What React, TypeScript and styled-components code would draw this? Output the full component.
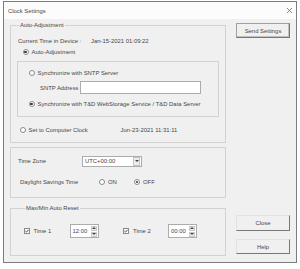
import React from "react";
import styled, { createGlobalStyle } from "styled-components";

const GlobalStyle = createGlobalStyle`
  html, body {
    margin: 0;
    padding: 0;
    background: #ffffff;
  }
  body {
    font-family: "Liberation Sans", Arial, sans-serif;
  }
`;

const Window = styled.div`
  box-sizing: border-box;
  width: 294px;
  height: 262px;
  margin: 1px 0 0 3px;
  border: 1px solid #7c7c7c;
  display: flex;
  flex-direction: column;
  font-size: 5.9px;
  color: #474747;
`;

const TitleBar = styled.div`
  flex: none;
  height: 17px;
  background: #fcfcfc;
  display: flex;
  align-items: center;
  justify-content: space-between;
  padding: 0 4px;
`;

const Body = styled.div`
  flex: 1;
  display: flex;
  background: #f0f0f0;
  padding: 2px 6px 0 6px;
`;

const LeftColumn = styled.div`
  width: 216px;
  display: flex;
  flex-direction: column;
`;

const RightColumn = styled.div`
  width: 54px;
  margin-left: 10px;
  padding: 2px 0 8px;
  display: flex;
  flex-direction: column;
  gap: 8px;
`;

const Spacer = styled.div`
  flex: 1;
`;

const Group = styled.fieldset<{ $pad: string; $top?: number }>`
  margin: ${(p) => p.$top ?? 0}px 0 0 0;
  padding: ${(p) => p.$pad};
  border: 1px solid #d2d2d2;
  min-width: 0;
  display: flex;
  flex-direction: column;
`;

const Caption = styled.legend`
  padding: 0 1px;
  margin-left: 2px;
  line-height: 8px;
  font-size: 5.9px;
`;

const Panel = styled.div<{ $pad: string; $top?: number; $w?: number; $h?: number }>`
  box-sizing: border-box;
  margin-top: ${(p) => p.$top ?? 0}px;
  width: ${(p) => (p.$w ? `${p.$w}px` : "auto")};
  height: ${(p) => (p.$h ? `${p.$h}px` : "auto")};
  padding: ${(p) => p.$pad};
  border: 1px solid #d2d2d2;
  display: flex;
  flex-direction: column;
`;

const Row = styled.div<{ $h?: number; $top?: number; $indent?: number }>`
  display: flex;
  align-items: center;
  height: ${(p) => p.$h ?? 10}px;
  margin-top: ${(p) => p.$top ?? 0}px;
  padding-left: ${(p) => p.$indent ?? 0}px;
  white-space: nowrap;
`;

const Label = styled.span<{ $w?: number }>`
  flex: none;
  width: ${(p) => (p.$w ? `${p.$w}px` : "auto")};
`;

const Radio = styled.span<{ $checked?: boolean }>`
  flex: none;
  box-sizing: border-box;
  width: 6px;
  height: 6px;
  margin: 0 3px 0 0.5px;
  border-radius: 50%;
  border: 1px solid #8a8a8a;
  background: #ffffff;
  display: flex;
  align-items: center;
  justify-content: center;

  &::after {
    content: "";
    width: 2.4px;
    height: 2.4px;
    border-radius: 50%;
    background: ${(p) => (p.$checked ? "#333333" : "transparent")};
  }
`;

const Option = styled.span<{ $w?: number }>`
  display: flex;
  align-items: center;
  width: ${(p) => (p.$w ? `${p.$w}px` : "auto")};
`;

const CheckBox = styled.span`
  flex: none;
  box-sizing: border-box;
  width: 6px;
  height: 6px;
  margin: 0 4px 0 0.5px;
  border: 1px solid #8a8a8a;
  background: #ffffff;
  display: flex;
  align-items: center;
  justify-content: center;
`;

const TextField = styled.div<{ $w: number; $h: number }>`
  box-sizing: border-box;
  width: ${(p) => p.$w}px;
  height: ${(p) => p.$h}px;
  border: 1px solid #acacac;
  background: #ffffff;
  display: flex;
  align-items: center;
  padding-left: 2px;
`;

const FieldText = styled.span`
  flex: 1;
`;

const DropButton = styled.span`
  box-sizing: border-box;
  width: 7px;
  height: 9px;
  margin-right: 1px;
  border: 1px solid #c4c4c4;
  background: #ececec;
  display: flex;
  align-items: center;
  justify-content: center;
`;

const SpinButtons = styled.span`
  display: flex;
  flex-direction: column;
  gap: 1px;
  margin-right: 1px;
`;

const SpinButton = styled.span`
  box-sizing: border-box;
  width: 6px;
  height: 5px;
  border: 1px solid #c8c8c8;
  background: #ececec;
  display: flex;
  align-items: center;
  justify-content: center;
`;

const Button = styled.div<{ $h: number; $framed?: boolean }>`
  box-sizing: border-box;
  height: ${(p) => p.$h}px;
  display: flex;
  align-items: center;
  justify-content: center;
  background: #f0f0f0;
  border: 1px solid ${(p) => (p.$framed ? "#a0a0a0" : "#e2e2e2")};
  border-right-color: #777777;
  border-bottom-color: #777777;
  box-shadow: ${(p) => (p.$framed ? "inset -1px -1px 0 #c0c0c0" : "none")};
`;

const Tri = ({ up }: { up?: boolean }) => (
  <svg width="4" height="2" viewBox="0 0 4 2">
    <path d={up ? "M0 2 L2 0 L4 2 Z" : "M0 0 L4 0 L2 2 Z"} fill="#444" />
  </svg>
);

const Check = () => (
  <svg width="4" height="4" viewBox="0 0 4 4">
    <path d="M0.4 2 L1.5 3.1 L3.6 0.8" stroke="#333" strokeWidth="0.9" fill="none" />
  </svg>
);

const CloseIcon = () => (
  <svg width="5" height="5" viewBox="0 0 5 5">
    <path d="M0 0 L5 5 M5 0 L0 5" stroke="#555" strokeWidth="0.7" />
  </svg>
);

const Spinner = ({ value }: { value: string }) => (
  <TextField $w={29} $h={14}>
    <FieldText>{value}</FieldText>
    <SpinButtons>
      <SpinButton>
        <Tri up />
      </SpinButton>
      <SpinButton>
        <Tri />
      </SpinButton>
    </SpinButtons>
  </TextField>
);

export default function App() {
  return (
    <>
      <GlobalStyle />
      <Window>
        <TitleBar>
          <span>Clock Settings</span>
          <CloseIcon />
        </TitleBar>
        <Body>
          <LeftColumn>
            <Group $pad="6px 0 7px 6px">
              <Caption>Auto-Adjustment</Caption>
              <Row $h={12} $indent={1}>
                <Label $w={73}>Current Time in Device :</Label>
                <span>Jan-15-2021 01:09:22</span>
              </Row>
              <Row $indent={5}>
                <Radio $checked />
                <span>Auto-Adjustment</span>
              </Row>
              <Panel $pad="6px 0 0 10px" $top={4} $w={202} $h={56}>
                <Row>
                  <Radio />
                  <span>Synchronize with SNTP Server</span>
                </Row>
                <Row $h={13} $top={3} $indent={12}>
                  <Label $w={40}>SNTP Address</Label>
                  <TextField $w={121} $h={13} />
                </Row>
                <Row $top={5}>
                  <Radio $checked />
                  <span>Synchronize with T&amp;D WebStorage Service / T&amp;D Data Server</span>
                </Row>
              </Panel>
              <Row $top={8} $indent={2}>
                <Radio />
                <Label $w={92}>Set to Computer Clock</Label>
                <span>Jun-23-2021 11:31:11</span>
              </Row>
            </Group>

            <Panel $pad="7px 0 10px 7px" $top={4}>
              <Row $h={12}>
                <Label $w={64}>Time Zone</Label>
                <TextField $w={60} $h={11}>
                  <FieldText>UTC+00:00</FieldText>
                  <DropButton>
                    <Tri />
                  </DropButton>
                </TextField>
              </Row>
              <Row $top={10} $indent={2}>
                <Label $w={78.5}>Daylight Savings Time</Label>
                <Option $w={35}>
                  <Radio />
                  ON
                </Option>
                <Option>
                  <Radio $checked />
                  OFF
                </Option>
              </Row>
            </Panel>

            <Group $pad="12px 0 17px 12px" $top={6}>
              <Caption>Max/Min Auto Reset</Caption>
              <Row $h={14}>
                <CheckBox>
                  <Check />
                </CheckBox>
                <Label $w={36}>Time 1</Label>
                <Spinner value="12:00" />
                <Row $h={14} $indent={24}>
                  <CheckBox>
                    <Check />
                  </CheckBox>
                  <Label $w={35}>Time 2</Label>
                  <Spinner value="00:00" />
                </Row>
              </Row>
            </Group>
          </LeftColumn>

          <RightColumn>
            <Button $h={15} $framed>
              Send Settings
            </Button>
            <Spacer />
            <Button $h={16}>Close</Button>
            <Button $h={15}>Help</Button>
          </RightColumn>
        </Body>
      </Window>
    </>
  );
}
